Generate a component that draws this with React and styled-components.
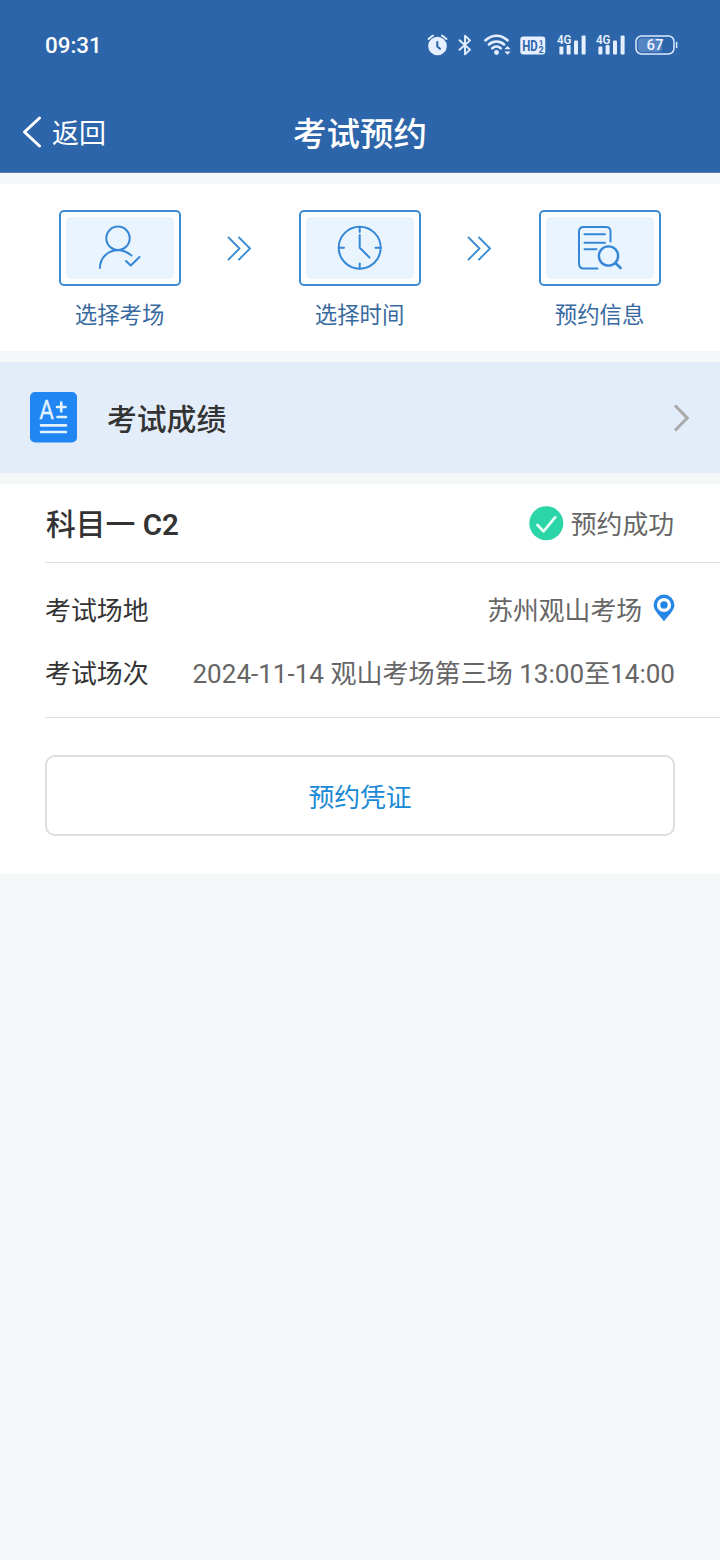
import styled, { createGlobalStyle } from 'styled-components'

const GlobalStyle = createGlobalStyle`
  * {
    box-sizing: border-box;
  }

  body {
    margin: 0;
    background-color: #f4f8f9;
    font-family: Roboto, 'Noto Sans CJK SC', sans-serif;
    color: #333;
  }

  svg {
    display: block;
    flex-shrink: 0;
  }
`

const Page = styled.div`
  min-height: 1560px;
`

const Header = styled.header`
  height: 173px;
  background-color: #2c65a9;
  border-bottom: 1px solid #5480b0;
  color: white;
`

const StatusBar = styled.div`
  height: 92px;
  padding: 2px 42px 4px 45px;
  display: flex;
  align-items: center;
  justify-content: space-between;
`

const Time = styled.span`
  font-size: 22.4px;
  font-weight: 500;
  line-height: 30px;
`

const StatusIcons = styled.div`
  display: flex;
  align-items: center;
`

const NavBar = styled.div`
  height: 80px;
  padding-left: 22px;
  display: grid;
  grid-template-columns: 220px 236px 1fr;
  align-items: center;
`

const Back = styled.div`
  display: flex;
  align-items: center;
  gap: 10px;
  font-size: 27px;
  line-height: 40px;

  span {
    padding-top: 3px;
  }
`

const Title = styled.h1`
  margin: 0;
  padding-top: 5px;
  font-size: 33.5px;
  line-height: 44px;
  font-weight: 500;
  text-align: center;
`

const Steps = styled.section`
  height: 167px;
  margin-top: 11px;
  padding: 26px 59.4px 0 58.6px;
  background-color: white;
  display: flex;
  justify-content: space-between;
`

const Step = styled.div`
  width: 122px;
  display: flex;
  flex-direction: column;
  align-items: center;
`

const StepBox = styled.div`
  width: 122px;
  height: 75.5px;
  padding: 5px;
  border: 2px solid #3b8bd3;
  border-radius: 5px;
`

const StepIcon = styled.div`
  height: 62px;
  border-radius: 5px;
  background-color: #e9f4ff;
  display: flex;
  align-items: center;
  justify-content: center;
`

const StepLabel = styled.span`
  margin-top: 13px;
  font-size: 22.4px;
  line-height: 32px;
  color: #386a9f;
`

const Arrow = styled.div`
  padding: 26px 1px 0 0;
`

const Score = styled.section`
  height: 111px;
  margin-top: 11px;
  padding: 0 30px;
  background-color: #e3edf9;
  display: flex;
  align-items: center;
`

const ScoreName = styled.h2`
  flex: 1;
  margin: 4px 0 0 30px;
  font-size: 29.8px;
  line-height: 40px;
  font-weight: 500;
`

const Card = styled.section`
  height: 390px;
  margin-top: 11px;
  padding-left: 45px;
  background-color: white;
`

const CardHead = styled.div`
  height: 79px;
  padding: 0 46px 0 1px;
  border-bottom: 1px solid #e0e0e0;
  display: flex;
  align-items: center;
  justify-content: space-between;
`

const Subject = styled.h3`
  margin: 4px 0 0;
  font-size: 29.8px;
  line-height: 40px;
  font-weight: 500;

  b {
    font-size: 29.5px;
    font-weight: 600;
  }
`

const Status = styled.div`
  display: flex;
  align-items: center;
  gap: 7px;
  font-size: 25.8px;
  line-height: 36px;
  color: #666;

  span {
    padding-top: 4px;
  }
`

const CardBody = styled.div`
  height: 155px;
  padding: 16px 45px 0 0;
  border-bottom: 1px solid #e0e0e0;
`

const Row = styled.div`
  height: 63.5px;
  display: flex;
  align-items: center;
  justify-content: space-between;
  font-size: 25.9px;
  line-height: 36px;
`

const Value = styled.span`
  display: flex;
  align-items: center;
  gap: 11px;
  font-size: ${({ $size }) => $size || 25.8}px;
  white-space: pre;
  color: #666;

  svg {
    margin-bottom: 5px;
  }
`

const Button = styled.button`
  display: block;
  width: 630px;
  height: 81px;
  margin-top: 37px;
  padding: 0;
  border: 2px solid #dedede;
  border-radius: 10px;
  background-color: white;
  font-family: inherit;
  font-size: 25.8px;
  color: #1989d4;
`

const AlarmIcon = () => (
  <svg width="21" height="22" viewBox="0 0 21 22">
    <path d="M1.5 5 6 1.5M19.5 5 15 1.5" stroke="#e6efff" strokeWidth="2" strokeLinecap="round" />
    <circle cx="10.5" cy="12" r="9.3" fill="#e6efff" />
    <path d="M10.3 8V12.5L13 14.8" fill="none" stroke="#2c65a9" strokeWidth="2" strokeLinecap="round" />
  </svg>
)

const BluetoothIcon = () => (
  <svg width="14" height="22" viewBox="0 0 14 22">
    <path d="M1.5 6.2 12 15.6 7 20.3V1.7L12 6.4 1.5 15.8" fill="none" stroke="#e6efff" strokeWidth="1.9" strokeLinejoin="round" strokeLinecap="round" />
  </svg>
)

const WifiIcon = () => (
  <svg width="27" height="22" viewBox="0 0 27 22">
    <g fill="none" stroke="#e6efff" strokeWidth="2.7" strokeLinecap="round">
      <path d="M1.5 6.3C8.3.2 16.7.2 23.5 6.3" />
      <path d="M4.9 10.4C9.3 6.5 15.7 6.5 20.1 10.4" />
      <path d="M8.3 14.2C10.8 12 14.2 12 16.7 14.2" />
    </g>
    <circle cx="12.5" cy="18.5" r="2.4" fill="#e6efff" />
    <path d="M20.4 15.3 23.5 12 26.6 15.3ZM20.4 17.5 23.5 20.8 26.6 17.5Z" fill="#e6efff" />
  </svg>
)

const HdIcon = () => (
  <svg width="26" height="19" viewBox="0 0 26 19">
    <rect x="0.3" y="0.5" width="25" height="18" rx="3" fill="#e6efff" />
    <g fill="#2c65a9" fontFamily="Roboto" fontWeight="700">
      <text x="2.2" y="14.5" fontSize="14" textLength="15.5" lengthAdjust="spacingAndGlyphs">HD</text>
      <text x="18.8" y="8.6" fontSize="8">1</text>
      <text x="18.5" y="16.6" fontSize="9">2</text>
    </g>
  </svg>
)

const SignalIcon = () => (
  <svg width="30" height="26" viewBox="0 0 30 26">
    <text x="0" y="12" fill="#e6efff" fontFamily="Roboto" fontWeight="600" fontSize="13" textLength="14.5" lengthAdjust="spacingAndGlyphs">4G</text>
    <g fill="#e6efff">
      <rect x="2.4" y="14.5" width="4" height="8" rx="1" />
      <rect x="9.6" y="13" width="4" height="9.5" rx="1" />
      <rect x="17" y="8.5" width="4" height="14" rx="1" />
      <rect x="24.6" y="3.5" width="4" height="19" rx="1" />
    </g>
  </svg>
)

const BatteryIcon = () => (
  <svg width="43" height="20" viewBox="0 0 43 20">
    <rect x="3" y="3" width="24" height="14" rx="4" fill="#5584c4" />
    <rect x="1" y="1" width="38" height="18" rx="5.5" fill="none" stroke="#dbe9ff" strokeWidth="1.5" />
    <path d="M41.6 7.5V12.5" stroke="#dbe9ff" strokeWidth="1.5" strokeLinecap="round" />
    <text x="20" y="15.3" textAnchor="middle" fill="#eef4ff" fontFamily="Roboto" fontWeight="500" fontSize="15">67</text>
  </svg>
)

const BackIcon = () => (
  <svg width="20" height="32" viewBox="0 0 20 32">
    <path d="M17.5 2 2.5 16 17.5 30" fill="none" stroke="white" strokeWidth="3" strokeLinecap="round" strokeLinejoin="round" />
  </svg>
)

const UserIcon = () => (
  <svg width="46" height="46" viewBox="0 0 46 46" fill="none" stroke="#3587d6" strokeWidth="2" strokeLinecap="round" strokeLinejoin="round">
    <circle cx="21" cy="13.3" r="11.7" />
    <path d="M3 43C3 32.5 11 25.3 21 25.3C26.5 25.3 30.5 27.2 34.5 30.5" />
    <path d="M29 36 33.8 40.5 42.5 32" />
  </svg>
)

const ClockIcon = () => (
  <svg width="46" height="46" viewBox="0 0 46 46" fill="none" stroke="#3587d6" strokeWidth="2" strokeLinecap="round" strokeLinejoin="round">
    <circle cx="22.7" cy="22.7" r="21" />
    <path d="M22.7 2V7M22.7 38.5V43.5M2 22.7H7M38.5 22.7H43.5M22.7 10V22.7L32.5 32.5" />
  </svg>
)

const FileIcon = () => (
  <svg width="46" height="46" viewBox="0 0 46 46" fill="none" stroke="#3587d6" strokeWidth="2" strokeLinecap="round" strokeLinejoin="round">
    <path d="M20.5 43.5H6.5Q2 43.5 2 38.5V6.5Q2 2 6.5 2H29Q33.5 2 33.5 6.5V16.5" />
    <path d="M7.5 9.3H28M7.5 17.8H28M7.5 24.3H19.5" />
    <circle cx="31.5" cy="31" r="9.6" strokeWidth="2.4" />
    <path d="M38.5 38 43.5 43" strokeWidth="2.6" />
  </svg>
)

const DoubleArrow = () => (
  <svg width="24" height="25" viewBox="0 0 24 25" fill="none" stroke="#3b8bd3" strokeWidth="1.8" strokeLinecap="round" strokeLinejoin="round">
    <path d="M1.5 1.5 12.5 12.5 1.5 23.5M12 1.5 23 12.5 12 23.5" />
  </svg>
)

const ScoreIcon = () => (
  <svg width="47" height="51" viewBox="0 0 47 51">
    <rect width="47" height="50.5" rx="5" fill="#2086f3" />
    <text x="9.3" y="26.6" fill="#e3f2ff" stroke="#e3f2ff" strokeWidth="0.3" fontFamily="Roboto" fontSize="25" textLength="14.6" lengthAdjust="spacingAndGlyphs">A</text>
    <path d="M27 15H35.5M31.2 10.5V19.5M27.5 25H36M11 33.4H36M11 40H36" stroke="#e3f2ff" strokeWidth="2.6" strokeLinecap="round" />
  </svg>
)

const ChevronIcon = () => (
  <svg width="17" height="28" viewBox="0 0 17 28">
    <path d="M2 1.5 14.2 14 2 26.5" fill="none" stroke="#aaa" strokeWidth="3.2" />
  </svg>
)

const CheckIcon = () => (
  <svg width="35" height="35" viewBox="0 0 35 35">
    <circle cx="17.3" cy="17.2" r="17" fill="#2bd5a8" />
    <path d="M8.5 19 14.5 25.3 26.3 11.2" fill="none" stroke="#e9fff8" strokeWidth="2.7" strokeLinecap="round" strokeLinejoin="round" />
  </svg>
)

const PinIcon = () => (
  <svg width="22" height="28" viewBox="0 0 22 28">
    <path d="M11 27.5C8 22.5.6 17 .6 11A10.4 10.4 0 0 1 21.4 11C21.4 17 14 22.5 11 27.5Z" fill="#2586e8" />
    <circle cx="11" cy="11" r="5.4" fill="#2586e8" stroke="white" strokeWidth="3.4" />
  </svg>
)

const IconSlot = styled.div`
  margin-right: ${({ $gap }) => $gap || 0}px;
`

const App = () => {
  return (
    <Page>
      <GlobalStyle />
      <Header>
        <StatusBar>
          <Time>09:31</Time>
          <StatusIcons>
            <IconSlot $gap={10}><AlarmIcon /></IconSlot>
            <IconSlot $gap={12}><BluetoothIcon /></IconSlot>
            <IconSlot $gap={9}><WifiIcon /></IconSlot>
            <IconSlot $gap={11}><HdIcon /></IconSlot>
            <IconSlot $gap={9}><SignalIcon /></IconSlot>
            <IconSlot $gap={9}><SignalIcon /></IconSlot>
            <IconSlot><BatteryIcon /></IconSlot>
          </StatusIcons>
        </StatusBar>
        <NavBar>
          <Back>
            <BackIcon />
            <span>返回</span>
          </Back>
          <Title>考试预约</Title>
        </NavBar>
      </Header>

      <Steps>
        <Step>
          <StepBox><StepIcon><UserIcon /></StepIcon></StepBox>
          <StepLabel>选择考场</StepLabel>
        </Step>
        <Arrow><DoubleArrow /></Arrow>
        <Step>
          <StepBox><StepIcon><ClockIcon /></StepIcon></StepBox>
          <StepLabel>选择时间</StepLabel>
        </Step>
        <Arrow><DoubleArrow /></Arrow>
        <Step>
          <StepBox><StepIcon><FileIcon /></StepIcon></StepBox>
          <StepLabel>预约信息</StepLabel>
        </Step>
      </Steps>

      <Score>
        <ScoreIcon />
        <ScoreName>考试成绩</ScoreName>
        <ChevronIcon />
      </Score>

      <Card>
        <CardHead>
          <Subject>科目一 <b>C2</b></Subject>
          <Status>
            <CheckIcon />
            <span>预约成功</span>
          </Status>
        </CardHead>
        <CardBody>
          <Row>
            <span>考试场地</span>
            <Value>
              苏州观山考场
              <PinIcon />
            </Value>
          </Row>
          <Row>
            <span>考试场次</span>
            <Value $size={26.05}>2024-11-14 观山考场第三场 13:00至14:00</Value>
          </Row>
        </CardBody>
        <Button>预约凭证</Button>
      </Card>
    </Page>
  )
}

export default App
